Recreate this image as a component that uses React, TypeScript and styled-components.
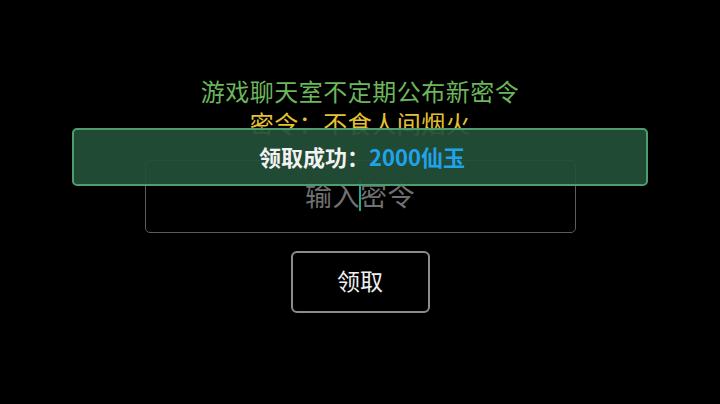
import { FC } from "react"
import styled, { createGlobalStyle } from "styled-components"

const GlobalStyle = createGlobalStyle`
	html, body {
		margin: 0;
		padding: 0;
		background: #000;
	}
	body {
		font-family: "Noto Sans CJK SC", "Noto Sans", sans-serif;
	}
`

const App: FC = () => {
	return (
		<Screen>
			<GlobalStyle />
			<Notice>
				<NoticeLine tone="green">游戏聊天室不定期公布新密令</NoticeLine>
				<NoticeLine tone="yellow">密令：不食人间烟火</NoticeLine>
			</Notice>
			<CodeField>
				<Placeholder>输入密令</Placeholder>
				<Caret />
			</CodeField>
			<ClaimButton>领取</ClaimButton>

			<Toast>
				<span>领取成功：</span>
				<Reward>2000仙玉</Reward>
			</Toast>
		</Screen>
	)
}

type NoticeLineProps = {
	tone: "green" | "yellow"
}

const Screen = styled.div`
	position: relative;
	width: 720px;
	height: 404px;
	box-sizing: border-box;
	padding-top: 75px;
	display: flex;
	flex-direction: column;
	align-items: center;
	overflow: hidden;
`

const Notice = styled.div`
	display: flex;
	flex-direction: column;
	align-items: center;
`

const NoticeLine = styled.div<NoticeLineProps>`
	font-size: 24px;
	line-height: 32px;
	letter-spacing: 0.5px;
	color: ${props => (props.tone === "green" ? "#6cb65c" : "#e6c232")};
`

const CodeField = styled.div`
	position: relative;
	margin-top: 21px;
	width: 431px;
	height: 73px;
	box-sizing: border-box;
	border: 1px solid #5c5c5c;
	border-radius: 5px;
	display: flex;
	align-items: center;
	justify-content: center;
	padding-bottom: 4px;
`

const Placeholder = styled.span`
	font-size: 27px;
	color: #707070;
	letter-spacing: 0.5px;
`

const Caret = styled.span`
	position: absolute;
	left: 50%;
	top: 20px;
	width: 2px;
	height: 30px;
	margin-left: -1px;
	background: #2aa68a;
`

const ClaimButton = styled.button`
	margin-top: 18px;
	width: 139px;
	height: 62px;
	box-sizing: border-box;
	background: transparent;
	border: 2px solid #8c8c8c;
	border-radius: 6px;
	color: #f0f0f0;
	font-family: "Noto Sans CJK SC", "Noto Sans", sans-serif;
	font-size: 23px;
	padding: 0 0 4px;
`

const Toast = styled.div`
	position: absolute;
	left: 72px;
	top: 128px;
	width: 576px;
	height: 58px;
	box-sizing: border-box;
	border: 2px solid #4f9c6c;
	border-radius: 5px;
	background: rgba(36, 80, 56, 0.93);
	display: flex;
	align-items: center;
	justify-content: center;
	font-size: 22px;
	font-weight: 700;
	color: #f2f2f2;
	padding: 0 0 2px 4px;
`

const Reward = styled.span`
	color: #1fa3ea;
`

export default App
